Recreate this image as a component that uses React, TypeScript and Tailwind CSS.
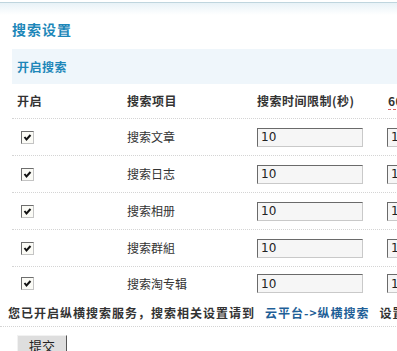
import React from 'react';

const items = ['搜索文章', '搜索日志', '搜索相册', '搜索群組', '搜索淘专辑'];

function OldCheckbox() {
  return (
    <span className="ml-[4px] flex h-[13px] w-[13px] items-center justify-center border border-t-[#6e6e6e] border-l-[#6e6e6e] border-r-[#c4c4c4] border-b-[#c4c4c4] bg-[#fbfbf6]">
      <svg width="9" height="9" viewBox="0 0 9 9">
        <polyline points="1.5,4 3.5,6.5 7.5,2" fill="none" stroke="#111" strokeWidth="2" />
      </svg>
    </span>
  );
}

function NumInput() {
  return (
    <div className="flex h-[19px] w-[106px] items-center border border-t-[#6a6a6a] border-l-[#6a6a6a] border-r-[#c9c9c9] border-b-[#c9c9c9] bg-[#f6f6f6] pl-[3px] font-['DejaVu_Sans',sans-serif] text-[12px] leading-none text-[#222]">
      10
    </div>
  );
}

export default function App() {
  const rows = 'grid grid-cols-[110px_130px_130px_130px] items-center';

  return (
    <div className="h-[351px] w-[397px] overflow-hidden bg-white font-['Noto_Sans_CJK_SC','Noto_Sans',sans-serif] text-[12px] text-[#333]">
      {/* top strip */}
      <div className="h-[2px] bg-white" />
      <div className="h-[13px] border-t border-[#bfd5de] bg-gradient-to-b from-[#e8f2f7] to-white" />

      <h2 className="ml-[12px] mt-[6px] text-[14px] font-bold leading-[16px] tracking-[1px] text-[#1d87b9]">搜索设置</h2>

      <div className="ml-[12px] mt-[12px] w-[600px]">
        <div className="flex h-[35px] items-center bg-[#eff6fb] px-[5px] font-bold tracking-[0.5px] text-[#1d87b9]">开启搜索</div>

        <div className={`${rows} h-[35px] border-b border-dotted border-[#d4d4d4] font-bold tracking-[0.5px]`}>
          <span className="pl-[5px]">开启</span>
          <span className="pl-[5px]">搜索项目</span>
          <span className="pl-[5px]">搜索时间限制(秒)</span>
          <span className="pl-[6px]">
            <span className="border-b border-dashed border-[#e06060]">60秒最大搜索次数</span>
          </span>
        </div>

        {items.map((name, i) => (
          <div
            key={name}
            className={`${rows} ${i < items.length - 1 ? 'h-[37px] border-b border-dotted border-[#d4d4d4]' : 'h-[33px]'}`}
          >
            <span className="pl-[5px]">
              <OldCheckbox />
            </span>
            <span className="pl-[5px]">{name}</span>
            <span className="pl-[5px]">
              <NumInput />
            </span>
            <span className="pl-[5px]">
              <NumInput />
            </span>
          </div>
        ))}
      </div>

      <div className="flex h-[27px] w-[600px] items-center whitespace-nowrap border-b border-dotted border-[#d4d4d4] pl-[8px] font-bold tracking-[1px] text-[#333]">
        您已开启纵横搜索服务，搜索相关设置请到
        <span className="ml-[10px] text-[#1f5f97]">云平台-&gt;纵横搜索</span>
        <span className="ml-[10px]">设置</span>
      </div>

      <button className="ml-[17px] mt-[8px] flex h-[21px] w-[50px] items-center justify-center border border-t-[#f2f2f2] border-l-[#f2f2f2] border-r-[#555] border-b-[#555] bg-[#dedede] text-[13px] leading-none text-[#222]">
        提交
      </button>
    </div>
  );
}
